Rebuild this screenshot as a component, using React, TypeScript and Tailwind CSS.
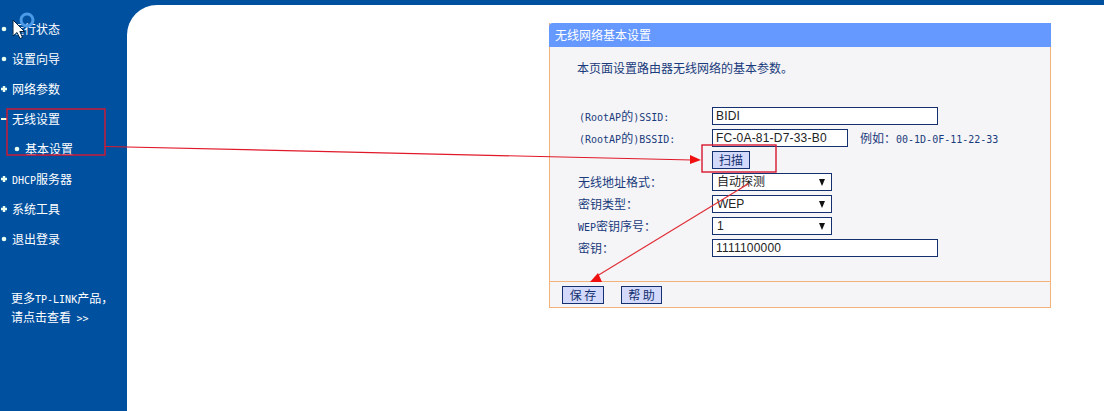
const cjk = { fontFamily: '"Noto Sans CJK SC", sans-serif' };

function Lat({ children }: { children: React.ReactNode }) {
  return <span className="font-['DejaVu_Sans_Mono',monospace] text-[10px] leading-none">{children}</span>;
}

function Marker({ kind }: { kind: "dot" | "plus" | "minus" }) {
  return (
    <svg width="6" height="6" viewBox="0 0 6 6" className="shrink-0 overflow-visible">
      {kind === "dot" && <circle cx="3" cy="3" r="2.3" fill="#e8fff0" />}
      {kind === "plus" && <path d="M3 0v6M0 3h6" stroke="#e8fff0" strokeWidth="2.4" />}
      {kind === "minus" && <path d="M0 3h6" stroke="#f4ffe0" strokeWidth="2" />}
    </svg>
  );
}

function NavRow({ kind, children, sub }: { kind: "dot" | "plus" | "minus"; children: React.ReactNode; sub?: boolean }) {
  return (
    <div className={`flex h-[30px] items-center ${sub ? "pl-[14px] gap-[5px]" : "pl-[1px] gap-[5px]"}`}>
      <Marker kind={kind} />
      <span className="text-[12px] leading-none text-white">{children}</span>
    </div>
  );
}

function FormRow({ label, children }: { label: React.ReactNode; children: React.ReactNode }) {
  return (
    <div className="flex h-[22px] items-center">
      <div className="w-[135px] pl-[1px] text-[12px] leading-none text-[#1a3b7c]">{label}</div>
      {children}
    </div>
  );
}

function Field({ w, value }: { w: string; value: string }) {
  return (
    <div className={`${w} flex h-[18px] items-center border border-[#14306f] bg-white px-[3px] font-['Liberation_Sans',sans-serif] text-[12px] tracking-[0.2px] text-[#222]`}>
      {value}
    </div>
  );
}

function Select({ value }: { value: string }) {
  return (
    <div className="flex h-[18px] w-[120px] items-center justify-between border border-[#14306f] bg-white pl-[4px] pr-[6px] text-[12px] text-[#222]">
      <span className="font-['Liberation_Sans','Noto_Sans_CJK_SC',sans-serif] leading-none">{value}</span>
      <svg width="6" height="7" viewBox="0 0 6 7"><path d="M0 0h6L3 7z" fill="#111" /></svg>
    </div>
  );
}

function Btn({ w, children }: { w: string; children: React.ReactNode }) {
  return (
    <div className={`${w} flex h-[18px] items-center justify-center border border-[#14306f] bg-[#d3d9fa] text-[12px] leading-none text-[#14306f]`}>
      {children}
    </div>
  );
}

export default function App() {
  return (
    <div className="relative flex h-[411px] w-[1104px] overflow-hidden bg-[#0050a0]" style={cjk}>
      <aside className="w-[127px] shrink-0 pt-[14px]">
        <NavRow kind="dot">运行状态</NavRow>
        <NavRow kind="dot">设置向导</NavRow>
        <NavRow kind="plus">网络参数</NavRow>
        <NavRow kind="minus">无线设置</NavRow>
        <NavRow kind="dot" sub>基本设置</NavRow>
        <NavRow kind="plus"><Lat>DHCP</Lat>服务器</NavRow>
        <NavRow kind="plus">系统工具</NavRow>
        <NavRow kind="dot">退出登录</NavRow>
        <div className="mt-[34px] pl-[11px] text-[12px] leading-[19px] text-white">
          <div>更多<Lat>TP-LINK</Lat>产品，</div>
          <div>请点击查看&nbsp;&nbsp;<Lat>&gt;&gt;</Lat></div>
        </div>
      </aside>

      <main className="mt-[5px] flex-1 rounded-tl-[30px] bg-white pl-[422px] pt-[18px]">
        <section className="flex h-[285px] w-[502px] flex-col border border-t-0 border-[#f3b27a] bg-[#f5f5f7]">
          <h1 className="-mx-px flex h-[24px] shrink-0 items-center rounded-tl-[4px] bg-[#6699ff] pl-[6px] text-[12px] font-normal text-white">
            无线网络基本设置
          </h1>
          <div className="flex-1 pl-[27px]">
            <p className="pt-[14px] text-[12px] leading-[14px] text-[#1a3b7c]">本页面设置路由器无线网络的基本参数。</p>
            <div className="mt-[30px] w-full">
              <FormRow label={<span className="ml-px"><Lat>(RootAP</Lat>的<Lat>)SSID:</Lat></span>}><Field w="w-[226px]" value="BIDI" /></FormRow>
              <FormRow label={<span className="ml-px"><Lat>(RootAP</Lat>的<Lat>)BSSID:</Lat></span>}>
                <Field w="w-[136px]" value="FC-0A-81-D7-33-B0" />
                <span className="ml-[12px] text-[12px] leading-none text-[#1a3b7c]">例如：<Lat>00-1D-0F-11-22-33</Lat></span>
              </FormRow>
              <FormRow label=""><Btn w="w-[38px]">扫描</Btn></FormRow>
              <FormRow label="无线地址格式："><Select value="自动探测" /></FormRow>
              <FormRow label="密钥类型："><Select value="WEP" /></FormRow>
              <FormRow label={<><Lat>WEP</Lat>密钥序号：</>}><Select value="1" /></FormRow>
              <FormRow label="密钥："><Field w="w-[226px]" value="1111100000" /></FormRow>
            </div>
          </div>
          <footer className="flex h-[26px] shrink-0 items-center gap-[17px] border-t border-[#f3b27a] pl-[12px]">
            <Btn w="w-[42px]">保 存</Btn>
            <Btn w="w-[41px]">帮 助</Btn>
          </footer>
        </section>
      </main>

      {/* annotations drawn over the page */}
      <svg className="pointer-events-none absolute left-0 top-0" width="1104" height="411" viewBox="0 0 1104 411" fill="none">
        <rect x="7" y="109" width="98" height="46" stroke="#d81830" strokeWidth="1.4" />
        <rect x="702" y="145" width="74" height="27" stroke="#d81830" strokeWidth="1.4" />
        <path d="M105 146.5L692 160" stroke="#e01828" strokeWidth="1.2" />
        <path d="M701 160L690 155L690 164Z" fill="#f01010" />
        <path d="M748 184L597 276" stroke="#e03038" strokeWidth="1.2" />
        <path d="M590 282L598 273L602 282Z" fill="#f01010" />
        {/* pointer */}
        <circle cx="27" cy="20" r="6" stroke="#4a9ae8" strokeWidth="3" />
        <path d="M13 20V36L17 32.5L20 38.5L22.5 37.5L19.8 31.5L24.5 31.5Z" fill="#fff" stroke="#06203f" strokeWidth="1" />
      </svg>
    </div>
  );
}
